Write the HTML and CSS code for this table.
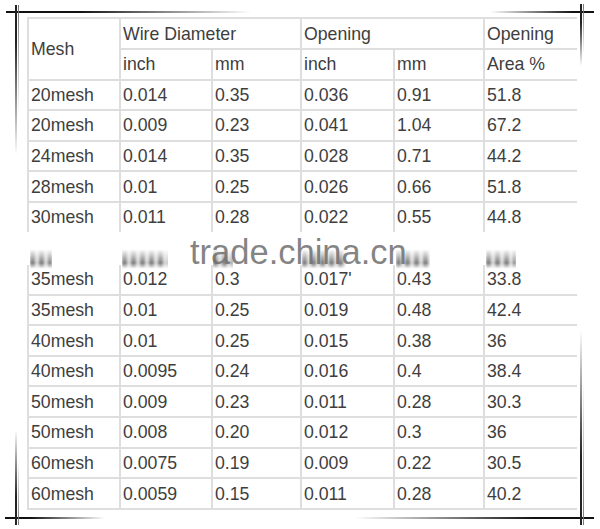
FILE: index.html
```html
<!DOCTYPE html>
<html>
<head>
<meta charset="utf-8">
<link rel="stylesheet" href="styles.css">
</head>
<body>
<div class="frame">
  <div class="table-wrap">
    <table class="spec">
      <colgroup>
        <col class="c1"><col class="c2"><col class="c3"><col class="c4"><col class="c5"><col class="c6">
      </colgroup>
      <tr class="h1">
        <td rowspan="2">Mesh</td>
        <td colspan="2">Wire Diameter</td>
        <td colspan="2">Opening</td>
        <td>Opening</td>
      </tr>
      <tr class="h2">
        <td>inch</td><td>mm</td><td>inch</td><td>mm</td><td>Area %</td>
      </tr>
      <tr><td>20mesh</td><td>0.014</td><td>0.35</td><td>0.036</td><td>0.91</td><td>51.8</td></tr>
      <tr><td>20mesh</td><td>0.009</td><td>0.23</td><td>0.041</td><td>1.04</td><td>67.2</td></tr>
      <tr><td>24mesh</td><td>0.014</td><td>0.35</td><td>0.028</td><td>0.71</td><td>44.2</td></tr>
      <tr><td>28mesh</td><td>0.01</td><td>0.25</td><td>0.026</td><td>0.66</td><td>51.8</td></tr>
      <tr><td>30mesh</td><td>0.011</td><td>0.28</td><td>0.022</td><td>0.55</td><td>44.8</td></tr>
      <tr class="gap"><td></td><td></td><td></td><td></td><td></td><td></td></tr>
      <tr class="after-gap"><td>35mesh</td><td>0.012</td><td>0.3</td><td>0.017'</td><td>0.43</td><td>33.8</td></tr>
      <tr><td>35mesh</td><td>0.01</td><td>0.25</td><td>0.019</td><td>0.48</td><td>42.4</td></tr>
      <tr><td>40mesh</td><td>0.01</td><td>0.25</td><td>0.015</td><td>0.38</td><td>36</td></tr>
      <tr><td>40mesh</td><td>0.0095</td><td>0.24</td><td>0.016</td><td>0.4</td><td>38.4</td></tr>
      <tr><td>50mesh</td><td>0.009</td><td>0.23</td><td>0.011</td><td>0.28</td><td>30.3</td></tr>
      <tr><td>50mesh</td><td>0.008</td><td>0.20</td><td>0.012</td><td>0.3</td><td>36</td></tr>
      <tr><td>60mesh</td><td>0.0075</td><td>0.19</td><td>0.009</td><td>0.22</td><td>30.5</td></tr>
      <tr><td>60mesh</td><td>0.0059</td><td>0.15</td><td>0.011</td><td>0.28</td><td>40.2</td></tr>
    </table>
  </div>

  <div class="smudge s1"></div>
  <div class="smudge s2"></div>
  <div class="smudge s3"></div>
  <div class="smudge s4"></div>
  <div class="smudge s5"></div>
  <div class="smudge s6"></div>
  <div class="watermark">trade.china.cn</div>

  <div class="corner tl-h"></div>
  <div class="corner tl-v1"></div>
  <div class="corner tl-v2"></div>
  <div class="corner tr-h"></div>
  <div class="corner tr-v1"></div>
  <div class="corner tr-v2"></div>
  <div class="corner bl-h"></div>
  <div class="corner bl-v1"></div>
  <div class="corner bl-v2"></div>
  <div class="corner br-h"></div>
  <div class="corner br-v1"></div>
  <div class="corner br-v2"></div>
</div>
</body>
</html>
```

FILE: styles.css
```css
html, body {
  margin: 0;
  padding: 0;
  background: #ffffff;
}

.frame {
  position: relative;
  width: 600px;
  height: 529px;
  overflow: hidden;
  background: #ffffff;
}

.table-wrap {
  padding: 17px 0 0 27px;
}

.spec {
  border-collapse: collapse;
  table-layout: fixed;
  width: 549px;
  font-family: "Liberation Sans", Arial, sans-serif;
  font-size: 17.7px;
  color: #3e3e3e;
}

.spec col.c1 { width: 92px; }
.spec col.c2 { width: 92px; }
.spec col.c3 { width: 89px; }
.spec col.c4 { width: 93px; }
.spec col.c5 { width: 90px; }
.spec col.c6 { width: 93px; }

.spec td {
  border: 2px solid #dedede;
  padding: 0 0 0 2px;
  height: 28.6px;
  line-height: 20px;
  vertical-align: middle;
  white-space: nowrap;
}

.spec tr td:last-child {
  border-right-style: hidden;
}

.spec tr.h1 td {
  height: 29px;
}

.spec tr.gap td {
  border-style: hidden;
  height: 33.5px;
  padding: 0;
}

/* watermark & scanning smudges */
.watermark {
  position: absolute;
  left: 190px;
  top: 238px;
  font-family: "Liberation Sans", Arial, sans-serif;
  font-size: 34.5px;
  line-height: 28px;
  color: rgba(110, 110, 110, 0.85);
}

.smudge {
  position: absolute;
  top: 249px;
  height: 20px;
  background: repeating-linear-gradient(90deg, rgba(60, 60, 60, 0.7) 0 5px, rgba(60, 60, 60, 0.15) 5px 9px);
  -webkit-mask-image: linear-gradient(to bottom, transparent, #000 70%, transparent);
  mask-image: linear-gradient(to bottom, transparent, #000 70%, transparent);
  filter: blur(1.5px);
}
.s1 { left: 30px; width: 22px; }
.s2 { left: 122px; width: 46px; }
.s3 { left: 213px; width: 20px; }
.s4 { left: 302px; width: 44px; }
.s5 { left: 396px; width: 34px; }
.s6 { left: 486px; width: 30px; }

/* frame corner marks */
.corner {
  position: absolute;
}
.tl-h {
  left: 6px; top: 11px; width: 245px; height: 2px;
  background: linear-gradient(to right, #111 0, #111 30%, rgba(17,17,17,0) 100%);
}
.tl-v1 {
  left: 15px; top: 5px; width: 2px; height: 150px;
  background: linear-gradient(to bottom, #222 0, #222 25%, rgba(34,34,34,0) 100%);
}
.tl-v2 {
  left: 18px; top: 5px; width: 1px; height: 110px;
  background: linear-gradient(to bottom, #777 0, rgba(119,119,119,0) 100%);
}
.tr-h {
  left: 490px; top: 11px; width: 104px; height: 2px;
  background: linear-gradient(to left, #111 0, #111 20%, rgba(17,17,17,0) 100%);
}
.tr-v1 {
  left: 580px; top: 4px; width: 2px; height: 62px;
  background: linear-gradient(to bottom, #222 0, #222 30%, rgba(34,34,34,0) 100%);
}
.tr-v2 {
  left: 583px; top: 4px; width: 1px; height: 50px;
  background: linear-gradient(to bottom, #777 0, rgba(119,119,119,0) 100%);
}
.bl-h {
  left: 5px; top: 517px; width: 100px; height: 2px;
  background: linear-gradient(to right, #111 0, #111 25%, rgba(17,17,17,0) 100%);
}
.bl-v1 {
  left: 15px; top: 430px; width: 2px; height: 95px;
  background: linear-gradient(to top, #222 0, #222 30%, rgba(34,34,34,0) 100%);
}
.bl-v2 {
  left: 18px; top: 460px; width: 1px; height: 65px;
  background: linear-gradient(to top, #777 0, rgba(119,119,119,0) 100%);
}
.br-h {
  left: 355px; top: 517px; width: 239px; height: 2px;
  background: linear-gradient(to left, #111 0, #111 25%, rgba(17,17,17,0) 100%);
}
.br-v1 {
  left: 580px; top: 330px; width: 2px; height: 195px;
  background: linear-gradient(to top, #222 0, #222 35%, rgba(34,34,34,0) 100%);
}
.br-v2 {
  left: 583px; top: 380px; width: 1px; height: 145px;
  background: linear-gradient(to top, #777 0, rgba(119,119,119,0) 100%);
}
```
